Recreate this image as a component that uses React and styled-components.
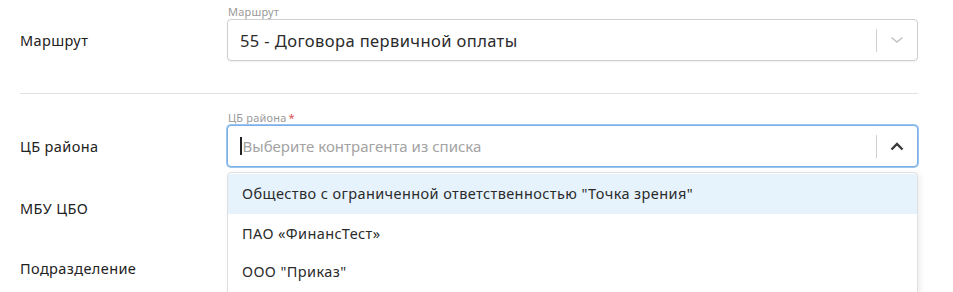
import React from 'react'
import styled, { createGlobalStyle } from 'styled-components'

const GlobalStyle = createGlobalStyle`
  html, body {
    margin: 0;
    padding: 0;
    background: #fff;
  }
  body {
    font-family: "Noto Sans", Roboto, "Liberation Sans", sans-serif;
    color: #222;
    letter-spacing: 0.4px;
  }
`

const Form = styled.div`
  width: 898px;
  padding: 5px 0 0 20px;
`

const Row = styled.div`
  display: grid;
  grid-template-columns: 207px 691px;
  align-items: end;
  height: ${p => p.h}px;
  margin-top: ${p => p.top || 0}px;
`

const RowLabel = styled.div`
  font-size: 14.5px;
  height: ${p => (p.plain ? 60 : 42)}px;
  line-height: ${p => (p.plain ? 60 : 42)}px;
  align-self: ${p => (p.plain ? 'center' : 'end')};
`

const Field = styled.div`
  position: relative;
  display: flex;
  flex-direction: column;
`

const FieldLabel = styled.div`
  font-size: 11px;
  line-height: 13px;
  color: #9a9a9a;
  padding-left: 1px;
  margin-bottom: 1px;
  letter-spacing: 0.2px;
`

const Star = styled.span`
  color: #d9534f;
  margin-left: 2px;
`

const Control = styled.div`
  box-sizing: border-box;
  height: 42px;
  display: flex;
  align-items: center;
  border: 1px solid ${p => (p.focused ? '#7aaee6' : '#cfcfcf')};
  border-radius: 4px;
  box-shadow: ${p => (p.focused ? '0 0 0 1px #9cc4ef' : '0 1px 2px rgba(0,0,0,0.06)')};
  background: #fff;
  padding-left: 12px;
`

const Value = styled.div`
  flex: 1;
  font-size: ${p => (p.placeholder ? 15 : 16.5)}px;
  letter-spacing: ${p => (p.placeholder ? 0 : 0.4)}px;
  color: ${p => (p.placeholder ? '#a3a3a3' : '#2b2b2b')};
  display: flex;
  align-items: center;
`

const Caret = styled.span`
  display: inline-block;
  width: 1.5px;
  height: 18px;
  background: #222;
  margin-right: 1px;
`

const Indicators = styled.div`
  display: flex;
  align-items: center;
  height: 100%;
`

const Sep = styled.div`
  width: 1px;
  height: 23px;
  background: #cfcfcf;
`

const Arrow = styled.div`
  width: 40px;
  display: flex;
  justify-content: center;
  align-items: center;
`

const Divider = styled.div`
  height: 1px;
  background: #e2e2e2;
  margin: 32px 0 17px;
`

const Menu = styled.div`
  position: absolute;
  top: calc(100% + 5px);
  left: 0;
  right: 0;
  background: #fff;
  border: 1px solid #e0e0e0;
  border-radius: 4px;
  box-shadow: 2px 2px 6px rgba(0,0,0,0.08);
  padding: 1px 0 12px;
  z-index: 2;
`

const Option = styled.div`
  height: 38px;
  display: flex;
  align-items: center;
  padding: 0 14px;
  font-size: 14.5px;
  color: #2b2b2b;
  background: ${p => (p.active ? '#e6f3fd' : 'transparent')};
  padding-bottom: ${p => (p.active ? 2 : 0)}px;
`

const Down = () => (
  <svg width="14" height="8" viewBox="0 0 14 8">
    <path d="M1.5 1.5 L7 6 L12.5 1.5" fill="none" stroke="#c2c2c2" strokeWidth="1.5" />
  </svg>
)

const Up = () => (
  <svg width="14" height="9" viewBox="0 0 14 9">
    <path d="M1.5 7.5 L7 2 L12.5 7.5" fill="none" stroke="#3a3a3a" strokeWidth="2.4" />
  </svg>
)

const options = [
  'Общество с ограниченной ответственностью "Точка зрения"',
  'ПАО «ФинансТест»',
  'ООО "Приказ"',
]

export default function App() {
  return (
    <>
      <GlobalStyle />
      <Form>
        <Row h={56}>
          <RowLabel>Маршрут</RowLabel>
          <Field>
            <FieldLabel>Маршрут</FieldLabel>
            <Control>
              <Value>55 - Договора первичной оплаты</Value>
              <Indicators>
                <Sep />
                <Arrow><Down /></Arrow>
              </Indicators>
            </Control>
          </Field>
        </Row>
        <Divider />
        <Row h={56}>
          <RowLabel>ЦБ района</RowLabel>
          <Field>
            <FieldLabel>ЦБ района<Star>*</Star></FieldLabel>
            <Control focused>
              <Value placeholder="1"><Caret />Выберите контрагента из списка</Value>
              <Indicators>
                <Sep />
                <Arrow><Up /></Arrow>
              </Indicators>
            </Control>
            <Menu>
              {options.map((o, i) => (
                <Option key={o} active={i === 0}>{o}</Option>
              ))}
            </Menu>
          </Field>
        </Row>
        <Row h={60} top={11}>
          <RowLabel plain>МБУ ЦБО</RowLabel>
        </Row>
        <Row h={60}>
          <RowLabel plain>Подразделение</RowLabel>
        </Row>
      </Form>
    </>
  )
}
